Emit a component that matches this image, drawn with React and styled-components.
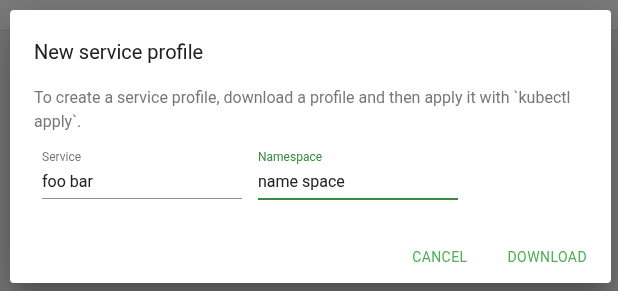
import React from 'react'
import styled, { createGlobalStyle } from 'styled-components'

const GlobalStyle = createGlobalStyle`
  html, body {
    margin: 0;
    padding: 0;
    height: 100%;
    background: #767676;
    font-family: Roboto, "Liberation Sans", sans-serif;
  }
  #root {
    height: 100%;
  }
`

const Page = styled.div`
  height: 100%;
  display: flex;
  flex-direction: column;
`

const TopBar = styled.div`
  height: 30px;
  background: #7b7b7b;
  border-bottom: 1px solid #6b6b6b;
`

const Backdrop = styled.div`
  position: fixed;
  inset: 0;
  padding: 10px 7px 8px 10px;
  display: flex;
  align-items: flex-start;
`

const Dialog = styled.div`
  flex: 1;
  background: #fff;
  border-radius: 4px;
  display: flex;
  flex-direction: column;
  box-shadow: 0 11px 15px -7px rgba(0, 0, 0, 0.2),
    0 24px 38px 3px rgba(0, 0, 0, 0.14), 0 9px 46px 8px rgba(0, 0, 0, 0.12);
`

const Title = styled.h2`
  margin: 0;
  padding: 26px 24px 18px;
  font-size: 20px;
  font-weight: 400;
  line-height: 32px;
  color: rgba(0, 0, 0, 0.87);
`

const Content = styled.div`
  padding: 0 24px 24px;
`

const ContentText = styled.p`
  margin: 0 0 12px;
  font-size: 16px;
  line-height: 24px;
  color: rgba(0, 0, 0, 0.54);
`

const Fields = styled.div`
  display: flex;
`

const Field = styled.div`
  width: 200px;
  margin: 4px 8px 8px;
  display: flex;
  flex-direction: column;
`

const Label = styled.label`
  font-size: 12px;
  line-height: 14px;
  height: 16px;
  color: ${(p) => (p.focused ? '#388e3c' : 'rgba(0, 0, 0, 0.54)')};
`

const Input = styled.input`
  font: inherit;
  font-size: 16px;
  line-height: 19px;
  height: 19px;
  padding: 6px 0 7px;
  margin: 0;
  border: 0;
  outline: none;
  background: transparent;
  color: rgba(0, 0, 0, 0.87);
  border-bottom: ${(p) =>
    p.focused ? '2px solid #388e3c' : '1px solid rgba(0, 0, 0, 0.42)'};
  margin-bottom: ${(p) => (p.focused ? '-1px' : '0')};
`

const Actions = styled.div`
  display: flex;
  justify-content: flex-end;
  margin: 8px 4px;
`

const Button = styled.button`
  margin: 0 4px;
  min-width: 64px;
  height: 36px;
  padding: 8px 16px;
  border: 0;
  border-radius: 4px;
  background: transparent;
  font-family: Roboto, "Liberation Sans", sans-serif;
  font-size: 14px;
  font-weight: 400;
  letter-spacing: 0.03em;
  text-transform: uppercase;
  color: #4caf50;
  cursor: pointer;
`

export default function App() {
  return (
    <Page>
      <GlobalStyle />
      <TopBar />
      <Backdrop>
        <Dialog>
          <Title>New service profile</Title>
          <Content>
            <ContentText>
              To create a service profile, download a profile and then apply it
              with `kubectl apply`.
            </ContentText>
            <Fields>
              <Field>
                <Label>Service</Label>
                <Input defaultValue="foo bar" />
              </Field>
              <Field>
                <Label focused>Namespace</Label>
                <Input focused defaultValue="name space" />
              </Field>
            </Fields>
          </Content>
          <Actions>
            <Button>Cancel</Button>
            <Button>Download</Button>
          </Actions>
        </Dialog>
      </Backdrop>
    </Page>
  )
}
